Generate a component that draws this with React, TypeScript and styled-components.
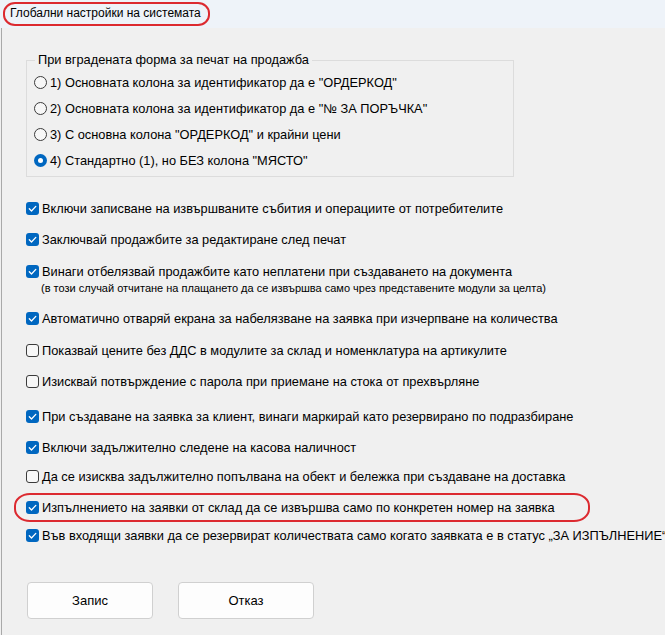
import React from "react";
import styled, { createGlobalStyle } from "styled-components";

const GlobalStyle = createGlobalStyle`
  html, body {
    margin: 0;
    padding: 0;
    background: #f0f0f0;
  }
  body {
    font-family: "Liberation Sans", Arial, sans-serif;
    font-size: 12.8px;
    color: #000;
  }
`;

const Window = styled.div`
  position: relative;
  width: 665px;
  height: 635px;
  overflow: hidden;
  display: flex;
  flex-direction: column;
  background: #f0f0f0;
`;

const TitleBar = styled.div`
  flex: none;
  height: 28px;
  box-sizing: border-box;
  display: flex;
  align-items: center;
  padding: 0 0 3px 10px;
  background: #eef3f9;
  font-size: 12px;
`;

const Body = styled.div`
  flex: 1;
  display: flex;
  flex-direction: column;
  margin-left: 1px;
  padding: 24px 0 0 24px;
  border-left: 1px solid #a9a9a9;
  white-space: nowrap;
`;

const Group = styled.fieldset`
  width: 488px;
  box-sizing: border-box;
  margin: 0;
  padding: 0 0 6px 7px;
  border: 1px solid #dcdcdc;
  display: flex;
  flex-direction: column;
  gap: 6px;
`;

const Legend = styled.legend`
  margin-left: 1px;
  padding: 0 3px;
  line-height: 16px;
`;

const RadioRow = styled.div`
  display: flex;
  align-items: center;
  gap: 3px;
  height: 20px;
  &:first-of-type {
    margin-top: 4px;
  }
`;

const RadioDot = styled.span<{ $on?: boolean }>`
  flex: none;
  width: 13px;
  height: 13px;
  box-sizing: border-box;
  border-radius: 50%;
  border: ${({ $on }) => ($on ? "none" : "1px solid #3b3b3b")};
  background: ${({ $on }) => ($on ? "#0067c0" : "#f7f7f7")};
  display: flex;
  align-items: center;
  justify-content: center;
  &::after {
    content: "";
    display: ${({ $on }) => ($on ? "block" : "none")};
    width: 5px;
    height: 5px;
    border-radius: 50%;
    background: #fff;
  }
`;

const CheckItem = styled.div<{ $gap: number }>`
  display: flex;
  flex-direction: column;
  margin-top: ${({ $gap }) => $gap}px;
`;

const CheckRow = styled.label`
  display: flex;
  align-items: center;
  gap: 3px;
  height: 20px;
`;

const Box = styled.span<{ $on?: boolean }>`
  flex: none;
  width: 13px;
  height: 13px;
  box-sizing: border-box;
  border-radius: 3px;
  border: ${({ $on }) => ($on ? "none" : "1px solid #3b3b3b")};
  background: ${({ $on }) => ($on ? "#0067c0" : "#f7f7f7")};
  display: flex;
  align-items: center;
  justify-content: center;
`;

const Note = styled.div`
  padding-left: 15px;
  font-size: 11px;
  line-height: 14px;
`;

const Buttons = styled.div`
  display: flex;
  gap: 25px;
  margin-top: 37px;
  padding-left: 1px;
`;

const Button = styled.button<{ $w: number }>`
  width: ${({ $w }) => $w}px;
  height: 37px;
  background: #fdfdfd;
  border: 1px solid #d0d0d0;
  border-radius: 4px;
  font-family: "Liberation Sans", Arial, sans-serif;
  font-size: 13px;
  color: #000;
`;

const TitleMark = styled.div`
  position: absolute;
  left: 3px;
  top: 2px;
  width: 207px;
  height: 24px;
  box-sizing: border-box;
  border: 2.5px solid #dc2a30;
  border-radius: 12px / 11px;
  pointer-events: none;
`;

const RowMark = styled.div`
  position: absolute;
  left: 14px;
  top: 493px;
  width: 576px;
  height: 29px;
  box-sizing: border-box;
  border: 2.5px solid #dc2a30;
  border-radius: 16px / 13px;
  pointer-events: none;
`;

const Tick = () => (
  <svg width="13" height="13" viewBox="0 0 13 13">
    <path d="M3.3 6.8 L5.5 9 L9.8 4.4" fill="none" stroke="#fff" strokeWidth="1.3" strokeLinecap="round" strokeLinejoin="round" />
  </svg>
);

const radios = [
  { text: '1) Основната колона за идентификатор да е "ОРДЕРКОД"', on: false },
  { text: '2) Основната колона за идентификатор да е "№ ЗА ПОРЪЧКА"', on: false },
  { text: '3) С основна колона "ОРДЕРКОД" и крайни цени', on: false },
  { text: '4) Стандартно (1), но БЕЗ колона "МЯСТО"', on: true },
];

type Check = { text: string; on: boolean; gap: number; note?: string };

const checks: Check[] = [
  { text: "Включи записване на извършваните събития и операциите от потребителите", on: true, gap: 21 },
  { text: "Заключвай продажбите за редактиране след печат", on: true, gap: 11 },
  {
    text: "Винаги отбелязвай продажбите като неплатени при създаването на документа",
    on: true,
    gap: 12,
    note: "(в този случай отчитане на плащането да се извършва само чрез представените модули за целта)",
  },
  { text: "Автоматично отваряй екрана за набелязване на заявка при изчерпване на количества", on: true, gap: 13 },
  { text: "Показвай цените без ДДС в модулите за склад и номенклатура на артикулите", on: false, gap: 12 },
  { text: "Изисквай потвърждение с парола при приемане на стока от прехвърляне", on: false, gap: 11 },
  { text: "При създаване на заявка за клиент, винаги маркирай като резервирано по подразбиране", on: true, gap: 15 },
  { text: "Включи задължително следене на касова наличност", on: true, gap: 11 },
  { text: "Да се изисква задължително попълвана на обект и бележка при създаване на доставка", on: false, gap: 9 },
  { text: "Изпълнението на заявки от склад да се извършва само по конкретен номер на заявка", on: true, gap: 11 },
  { text: "Във входящи заявки да се резервират количествата само когато заявката е в статус „ЗА ИЗПЪЛНЕНИЕ“", on: true, gap: 8 },
];

const App = () => {
  return (
    <>
      <GlobalStyle />
      <Window>
        <TitleBar>Глобални настройки на системата</TitleBar>
        <Body>
          <Group>
            <Legend>При вградената форма за печат на продажба</Legend>
            {radios.map((r) => (
              <RadioRow key={r.text}>
                <RadioDot $on={r.on} />
                {r.text}
              </RadioRow>
            ))}
          </Group>
          {checks.map((c) => (
            <CheckItem key={c.text} $gap={c.gap}>
              <CheckRow>
                <Box $on={c.on}>{c.on && <Tick />}</Box>
                {c.text}
              </CheckRow>
              {c.note && <Note>{c.note}</Note>}
            </CheckItem>
          ))}
          <Buttons>
            <Button $w={126}>Запис</Button>
            <Button $w={136}>Отказ</Button>
          </Buttons>
        </Body>
        <TitleMark />
        <RowMark />
      </Window>
    </>
  );
};

export default App;
